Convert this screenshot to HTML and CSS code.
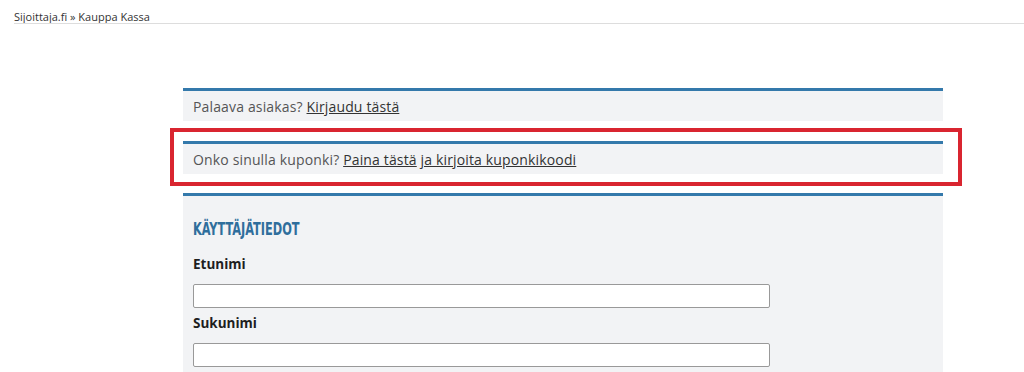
FILE: index.html
```html
<!doctype html>
<html lang="fi">
  <head>
    <meta charset="UTF-8" />
    <meta name="viewport" content="width=device-width, initial-scale=1.0" />
    <title>Kauppa Kassa</title>
    <link rel="stylesheet" href="styles.css">
  </head>
  <body>
    <div class="breadcrumb">
      <a href="#">Sijoittaja.fi</a> &raquo; Kauppa Kassa
    </div>

    <div class="checkout">
      <div class="notice">
        Palaava asiakas? <a href="#">Kirjaudu tästä</a>
      </div>

      <!-- coupon notice, highlighted -->
      <div class="notice highlighted">
        Onko sinulla kuponki? <a href="#">Paina tästä</a> <a href="#">ja kirjoita kuponkikoodi</a>
      </div>

      <div class="section">
        <h2><span>Käyttäjätiedot</span></h2>
        <label for="etunimi">Etunimi</label>
        <input type="text" id="etunimi" />
        <label for="sukunimi">Sukunimi</label>
        <input type="text" id="sukunimi" />
      </div>
    </div>
  </body>
</html>
```

FILE: styles.css
```css
body {
  margin: 0;
  font-family: "Open Sans", Lato, Arial, sans-serif;
  color: #555;
  background: #fff;
  overflow: hidden;
}
a {
  color: #333;
}
.breadcrumb {
  margin-left: 14px;
  height: 23px;
  font-size: 11px;
  line-height: 33px;
  color: #333;
  border-bottom: 1px solid #ddd;
  overflow: hidden;
}
.breadcrumb a {
  text-decoration: none;
}
.checkout {
  width: 760px;
  margin: 64px 0 0 183px;
}
.notice {
  position: relative;
  background-color: #f2f3f5;
  border-top: 3px solid #3479ab;
  padding: 7px 10px 6px;
  font-size: 14px;
  letter-spacing: 0.15px;
  line-height: 17px;
  margin-bottom: 20px;
}
.highlighted::after {
  content: "";
  position: absolute;
  top: -16px;
  left: -13px;
  right: -19px;
  bottom: -12px;
  border: 4px solid #d92530;
}
.section {
  background-color: #f2f3f5;
  border-top: 3px solid #3479ab;
  padding: 20px 10px 20px;
  margin-top: -1px;
}
.section h2 {
  margin: 0 0 15px;
  line-height: 25px;
  font-family: "Liberation Sans Narrow", "DejaVu Sans Condensed", sans-serif;
  font-size: 18px;
  font-weight: 700;
  color: #2f6e9c;
  text-transform: uppercase;
}
.section h2 span {
  display: inline-block;
  transform: scaleX(0.7);
  transform-origin: left center;
}
label {
  display: block;
  font-size: 13.5px;
  line-height: 17px;
  font-weight: 700;
  color: #1e1e1e;
  margin-bottom: 11px;
}
input {
  display: block;
  box-sizing: border-box;
  width: 577px;
  height: 24px;
  margin: 0 0 7px;
  border: 1px solid #999;
  border-radius: 2px;
  background: #fff;
}
```
